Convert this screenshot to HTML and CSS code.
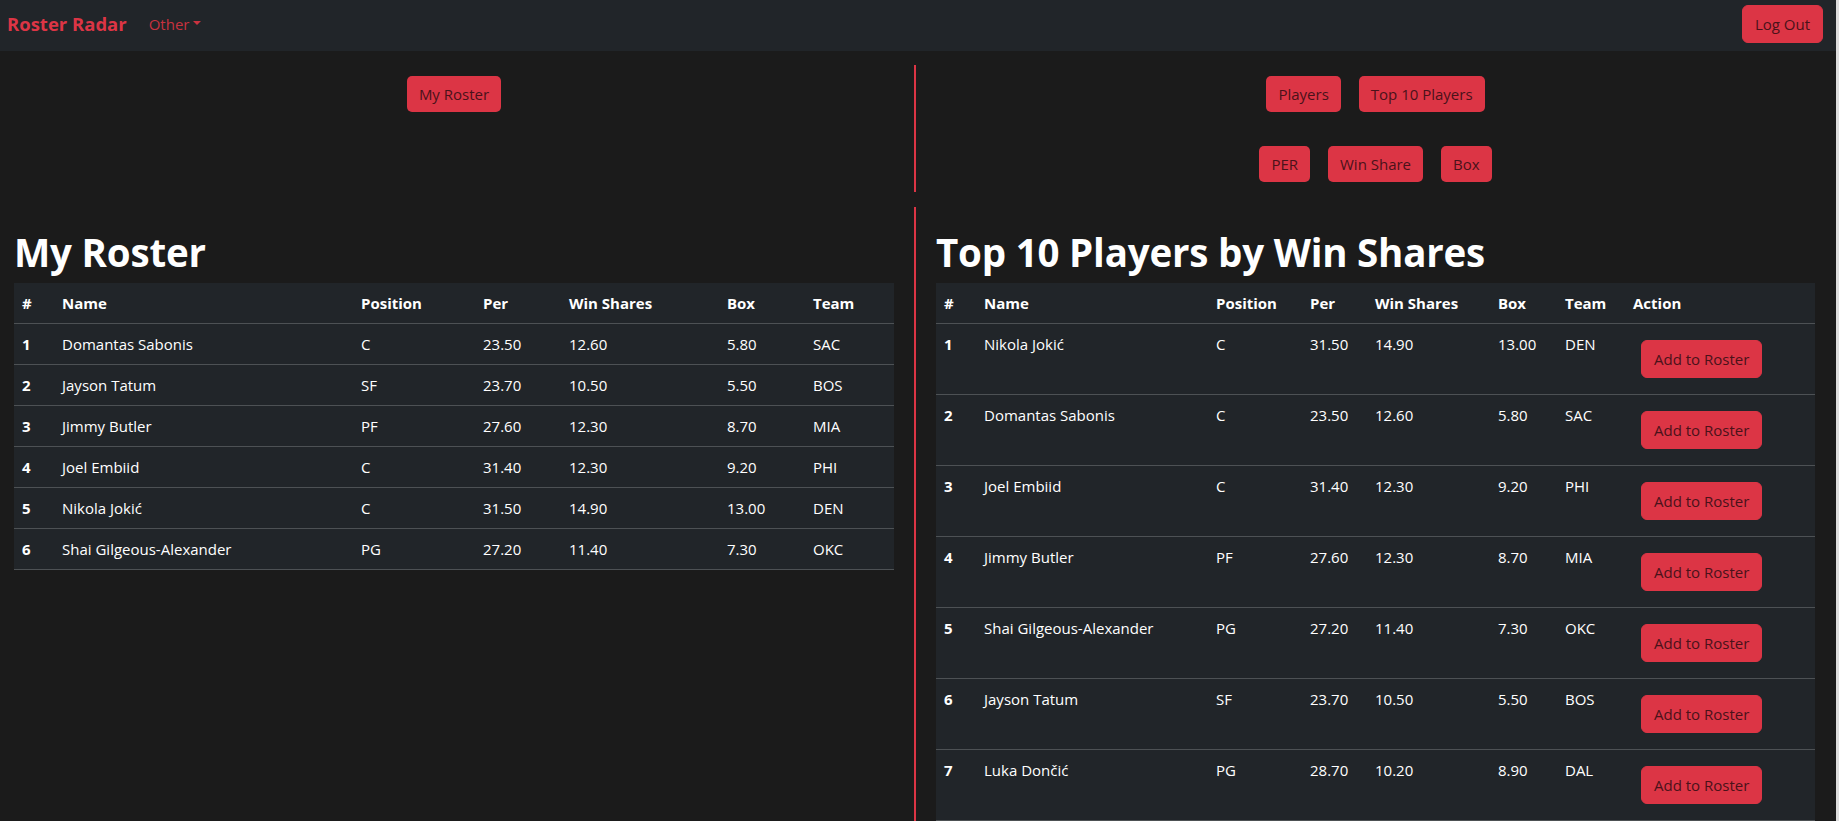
FILE: index.html
```html
<!DOCTYPE html>
<html lang="en">
<head>
<meta charset="utf-8">
<title>Roster Radar</title>
<link rel="stylesheet" href="styles.css">
</head>
<body>
<nav class="navbar">
  <div class="nav-left">
    <a class="brand" href="#">Roster Radar</a>
    <a class="nav-link" href="#">Other<span class="caret"></span></a>
  </div>
  <button class="btn btn-bordered">Log Out</button>
</nav>
<main class="page">
  <section class="row top-row">
    <div class="col col-left">
      <div class="btn-group"><button class="btn">My Roster</button></div>
    </div>
    <div class="col col-right">
      <div class="btn-group"><button class="btn">Players</button><button class="btn">Top 10 Players</button></div>
      <div class="btn-group"><button class="btn">PER</button><button class="btn">Win Share</button><button class="btn">Box</button></div>
    </div>
  </section>
  <section class="row bottom-row">
    <div class="col col-left">
      <h1 class="title">My Roster</h1>
      <table class="table roster">
        <colgroup><col class="c-num"><col class="c-name"><col class="c-pos"><col class="c-per"><col class="c-ws"><col class="c-box"><col class="c-team"></colgroup>
        <thead><tr><th>#</th><th>Name</th><th>Position</th><th>Per</th><th>Win Shares</th><th>Box</th><th>Team</th></tr></thead>
        <tbody>
          <tr><th>1</th><td>Domantas Sabonis</td><td>C</td><td>23.50</td><td>12.60</td><td>5.80</td><td>SAC</td></tr>
          <tr><th>2</th><td>Jayson Tatum</td><td>SF</td><td>23.70</td><td>10.50</td><td>5.50</td><td>BOS</td></tr>
          <tr><th>3</th><td>Jimmy Butler</td><td>PF</td><td>27.60</td><td>12.30</td><td>8.70</td><td>MIA</td></tr>
          <tr><th>4</th><td>Joel Embiid</td><td>C</td><td>31.40</td><td>12.30</td><td>9.20</td><td>PHI</td></tr>
          <tr><th>5</th><td>Nikola Jokić</td><td>C</td><td>31.50</td><td>14.90</td><td>13.00</td><td>DEN</td></tr>
          <tr><th>6</th><td>Shai Gilgeous-Alexander</td><td>PG</td><td>27.20</td><td>11.40</td><td>7.30</td><td>OKC</td></tr>
        </tbody>
      </table>
    </div>
    <div class="col col-right">
      <h1 class="title">Top 10 Players by Win Shares</h1>
      <table class="table top10">
        <colgroup><col class="t-num"><col class="t-name"><col class="t-pos"><col class="t-per"><col class="t-ws"><col class="t-box"><col class="t-team"><col class="t-act"></colgroup>
        <thead><tr><th>#</th><th>Name</th><th>Position</th><th>Per</th><th>Win Shares</th><th>Box</th><th>Team</th><th>Action</th></tr></thead>
        <tbody>
          <tr><th>1</th><td>Nikola Jokić</td><td>C</td><td>31.50</td><td>14.90</td><td>13.00</td><td>DEN</td><td><button class="btn btn-bordered btn-add">Add to Roster</button></td></tr>
          <tr><th>2</th><td>Domantas Sabonis</td><td>C</td><td>23.50</td><td>12.60</td><td>5.80</td><td>SAC</td><td><button class="btn btn-bordered btn-add">Add to Roster</button></td></tr>
          <tr><th>3</th><td>Joel Embiid</td><td>C</td><td>31.40</td><td>12.30</td><td>9.20</td><td>PHI</td><td><button class="btn btn-bordered btn-add">Add to Roster</button></td></tr>
          <tr><th>4</th><td>Jimmy Butler</td><td>PF</td><td>27.60</td><td>12.30</td><td>8.70</td><td>MIA</td><td><button class="btn btn-bordered btn-add">Add to Roster</button></td></tr>
          <tr><th>5</th><td>Shai Gilgeous-Alexander</td><td>PG</td><td>27.20</td><td>11.40</td><td>7.30</td><td>OKC</td><td><button class="btn btn-bordered btn-add">Add to Roster</button></td></tr>
          <tr><th>6</th><td>Jayson Tatum</td><td>SF</td><td>23.70</td><td>10.50</td><td>5.50</td><td>BOS</td><td><button class="btn btn-bordered btn-add">Add to Roster</button></td></tr>
          <tr><th>7</th><td>Luka Dončić</td><td>PG</td><td>28.70</td><td>10.20</td><td>8.90</td><td>DAL</td><td><button class="btn btn-bordered btn-add">Add to Roster</button></td></tr>
        </tbody>
      </table>
    </div>
  </section>
</main>
<div class="scroll-edge"></div>
</body>
</html>
```

FILE: styles.css
```css
* { box-sizing: border-box; }

html, body {
  margin: 0;
  padding: 0;
  height: 100%;
  overflow: hidden;
}

body {
  background: #1b1b1b;
  color: #fff;
  font-family: "Open Sans", "Noto Sans", sans-serif;
  font-size: 15px;
  line-height: 24px;
  padding-right: 3px;
}

.navbar {
  height: 51px;
  background: #212529;
  display: flex;
  align-items: center;
  justify-content: space-between;
  padding: 0 13px 4px 7px;
}

.nav-left {
  display: flex;
  align-items: center;
}

.brand {
  color: #dc3545;
  font-weight: 700;
  font-size: 18.5px;
  text-decoration: none;
  margin-right: 22px;
}

.nav-link {
  color: #c9323f;
  text-decoration: none;
  font-size: 15px;
  display: flex;
  align-items: center;
}

.caret {
  display: inline-block;
  margin-left: 4px;
  border-top: 4px solid #c9323f;
  border-left: 4px solid transparent;
  border-right: 4px solid transparent;
  margin-top: -2px;
}

.btn {
  font-family: inherit;
  font-size: 15px;
  line-height: 24px;
  padding: 6px 12px;
  background: #dc3545;
  color: #4a121a;
  border: 0;
  border-radius: 5px;
  cursor: pointer;
}

.btn-bordered {
  border: 1px solid #dc3545;
  border-radius: 6px;
}

.page {
  width: 100%;
}

.row {
  display: grid;
  grid-template-columns: 914px 1fr;
}

.col-left {
  padding: 0 20px 0 14px;
}

.col-right {
  border-left: 2px solid #dc3545;
  padding: 0 21px 0 20px;
}

.top-row {
  margin-top: 14px;
  height: 127px;
}

.top-row .col {
  display: flex;
  flex-direction: column;
  align-items: center;
  gap: 34px;
  padding-top: 11px;
}

.btn-group {
  display: flex;
  gap: 18px;
  justify-content: center;
}

.bottom-row {
  margin-top: 15px;
  min-height: 614px;
}

.title {
  font-size: 38.5px;
  font-weight: 700;
  line-height: 44px;
  margin: 23px 0 9px 0;
  letter-spacing: -0.2px;
}

.table {
  width: 100%;
  border-collapse: collapse;
  table-layout: fixed;
  background: #212529;
  color: #fff;
}

.table th,
.table td {
  padding: 8px;
  text-align: left;
  vertical-align: top;
  border-bottom: 1px solid #4d5154;
  white-space: nowrap;
}

.table th {
  font-weight: 700;
}

.c-num { width: 40px; }
.c-name { width: 299px; }
.c-pos { width: 122px; }
.c-per { width: 86px; }
.c-ws { width: 158px; }
.c-box { width: 86px; }
.c-team { width: 89px; }

.t-num { width: 40px; }
.t-name { width: 232px; }
.t-pos { width: 94px; }
.t-per { width: 65px; }
.t-ws { width: 123px; }
.t-box { width: 67px; }
.t-team { width: 68px; }
.t-act { width: 190px; }

.btn-add {
  margin: 8px;
}

.scroll-edge {
  position: fixed;
  top: 0;
  right: 0;
  width: 3px;
  height: 100%;
  background: #dedede;
}
```
